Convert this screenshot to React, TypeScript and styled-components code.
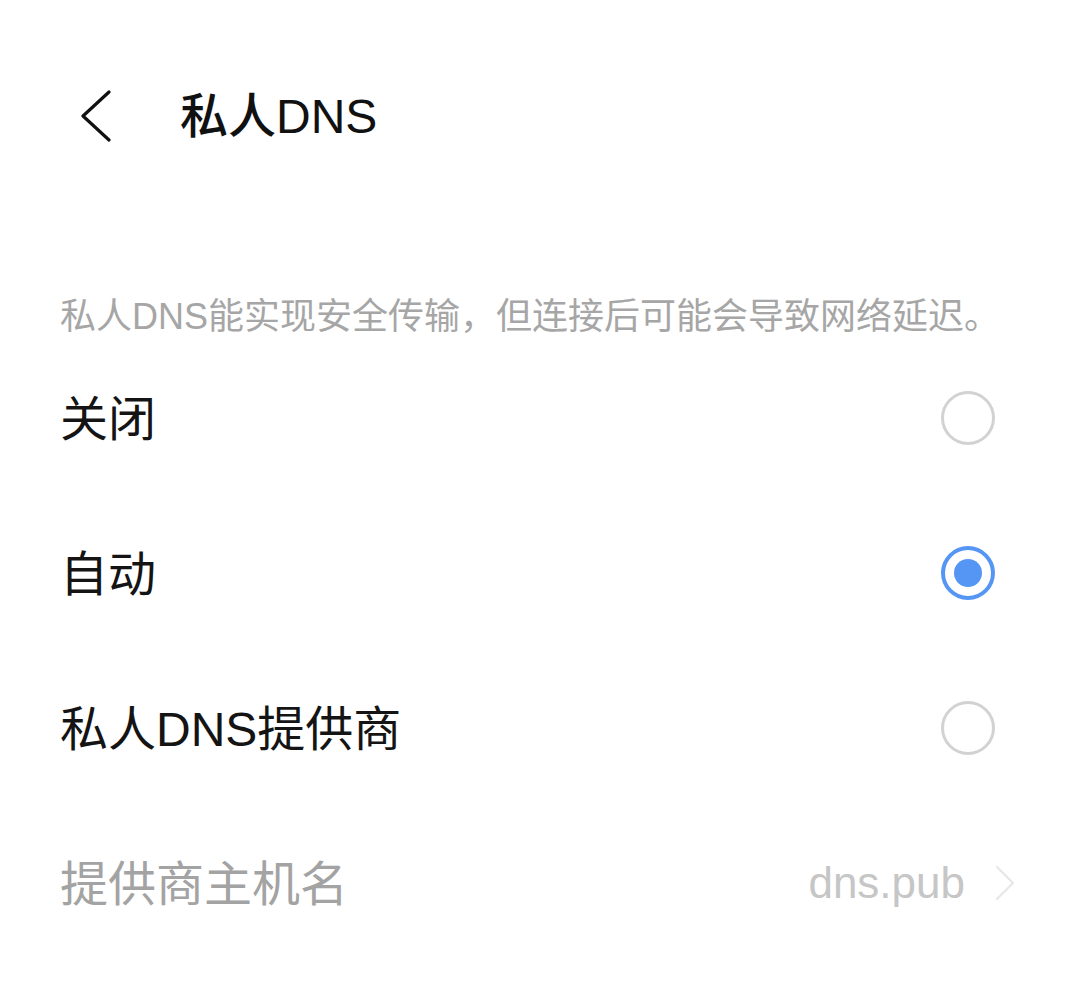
import React, { useState } from 'react';
import styled, { createGlobalStyle } from 'styled-components';

const GlobalStyle = createGlobalStyle`
  html, body {
    margin: 0;
    padding: 0;
    background: #ffffff;
  }
  body {
    font-family: "Liberation Sans", "Noto Sans CJK SC", sans-serif;
  }
`;

const Page = styled.div`
  width: 1080px;
  min-height: 1008px;
  background: #ffffff;
`;

const Header = styled.header`
  height: 232px;
  display: flex;
  align-items: center;
`;

const BackButton = styled.button`
  width: 180px;
  height: 80px;
  padding: 0 0 0 80px;
  border: none;
  background: none;
  display: flex;
  align-items: center;
  cursor: pointer;
`;

const Title = styled.h1`
  margin: 0 0 8px;
  font-size: 48px;
  font-weight: 500;
  color: #111111;
`;

const Hint = styled.p`
  margin: 0;
  padding: 62px 60px 0;
  font-size: 36px;
  line-height: 46px;
  color: #a6a6a6;
`;

const Row = styled.div<{ $right?: number }>`
  height: 155px;
  display: flex;
  align-items: center;
  justify-content: space-between;
  padding: 0 ${(p) => p.$right ?? 85}px 0 60px;
  cursor: pointer;
`;

const Label = styled.span<{ $muted?: boolean }>`
  margin-bottom: 6px;
  font-size: 48px;
  color: ${(p) => (p.$muted ? '#a3a3a3' : '#141414')};
`;

const Radio = styled.span<{ $checked: boolean }>`
  width: 54px;
  height: 54px;
  box-sizing: border-box;
  border-radius: 50%;
  border: ${(p) => (p.$checked ? '4px solid #5596f4' : '3.5px solid #d2d2d2')};
  display: flex;
  align-items: center;
  justify-content: center;

  &::after {
    content: '';
    width: 28px;
    height: 28px;
    border-radius: 50%;
    background: #5596f4;
    display: ${(p) => (p.$checked ? 'block' : 'none')};
  }
`;

const Value = styled.span`
  display: flex;
  align-items: center;
  gap: 30px;
  font-size: 44px;
  color: #c6c6c6;
`;

const modes = [
  { id: 'off', label: '关闭' },
  { id: 'auto', label: '自动' },
  { id: 'host', label: '私人DNS提供商' },
];

function App() {
  const [mode, setMode] = useState('auto');

  return (
    <Page>
      <GlobalStyle />
      <Header>
        <BackButton aria-label="返回">
          <svg width="32" height="52" viewBox="0 0 32 52" fill="none">
            <path d="M29 2 L3 26 L29 50" stroke="#111" strokeWidth="3.2" strokeLinecap="round" strokeLinejoin="round" />
          </svg>
        </BackButton>
        <Title>私人DNS</Title>
      </Header>

      <Hint>私人DNS能实现安全传输，但连接后可能会导致网络延迟。</Hint>

      {modes.map((m) => (
        <Row key={m.id} onClick={() => setMode(m.id)}>
          <Label>{m.label}</Label>
          <Radio $checked={mode === m.id} />
        </Row>
      ))}

      <Row $right={65}>
        <Label $muted>提供商主机名</Label>
        <Value>
          dns.pub
          <svg width="20" height="36" viewBox="0 0 20 36" fill="none">
            <path d="M2 2 L18 18 L2 34" stroke="#e8e8e8" strokeWidth="2.4" strokeLinecap="round" strokeLinejoin="round" />
          </svg>
        </Value>
      </Row>
    </Page>
  );
}

export default App;
